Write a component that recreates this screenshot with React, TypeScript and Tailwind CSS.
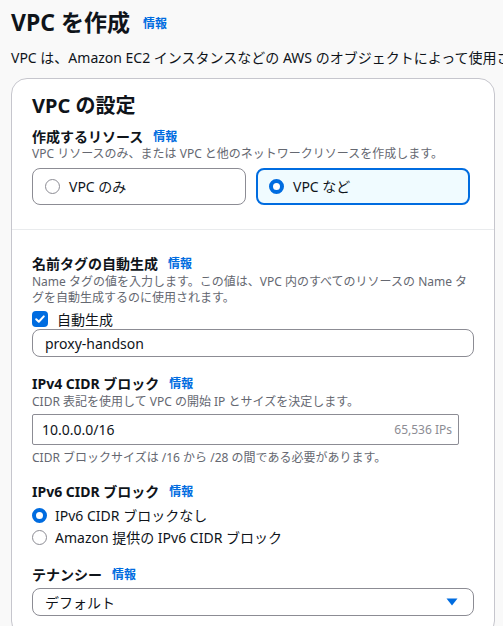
import { useState } from 'react'

const font = { fontFamily: '"Noto Sans", "Noto Sans CJK JP", sans-serif' }

function Info() {
  return <span className="ml-[10px] text-[12px] font-bold text-[#006ce0]">情報</span>
}

function Label({ children }: { children: React.ReactNode }) {
  return (
    <div className="flex items-center text-[14px] font-bold leading-[18px] text-[#0f141a]">
      {children}
      <Info />
    </div>
  )
}

function Desc({ children, className = '' }: { children: React.ReactNode; className?: string }) {
  return <p className={`text-[12px] leading-[16px] text-[#656871] ${className}`}>{children}</p>
}

function Radio({ checked }: { checked: boolean }) {
  return checked ? (
    <span className="h-[15px] w-[15px] shrink-0 rounded-full border-[4px] border-[#006ce0] bg-white" />
  ) : (
    <span className="h-[15px] w-[15px] shrink-0 rounded-full border border-[#8c8c94] bg-white" />
  )
}

export default function App() {
  const [resource, setResource] = useState<'vpc' | 'more'>('more')
  const [ipv6, setIpv6] = useState(0)

  return (
    <div style={font} className="h-[626px] w-[503px] overflow-hidden bg-[#f9f9f9] pl-[11px] pt-[4px] text-[#0f141a]">
      {/* ページ見出し */}
      <h1 className="flex items-center whitespace-nowrap text-[23px] font-bold leading-[32px]">
        VPC を作成
        <span className="ml-[13px] mt-[4px] text-[12px] font-bold text-[#006ce0]">情報</span>
      </h1>
      <p className="mt-[8px] whitespace-nowrap text-[14px] leading-[20px]">
        VPC は、Amazon EC2 インスタンスなどの AWS のオブジェクトによって使用されます
      </p>

      <div className="mt-[10px] w-[484px] rounded-[16px] border border-[#c6c6cd] bg-white">
        <div className="px-[20px] pt-[13px] pb-[24px]">
          <h2 className="text-[20px] font-bold leading-[28px]">VPC の設定</h2>
          <div className="mt-[8px]">
            <Label>作成するリソース</Label>
            <Desc>VPC リソースのみ、または VPC と他のネットワークリソースを作成します。</Desc>
          </div>
          <div className="mt-[6px] flex gap-[10px]">
            <button
              onClick={() => setResource('vpc')}
              className={`flex h-[37px] w-[214px] items-center gap-[9px] rounded-[8px] text-[14px] ${
                resource === 'vpc'
                  ? 'border-2 border-[#006ce0] bg-[#f0fbff] pl-[11px]'
                  : 'border border-[#8c8c94] bg-white pl-[12px]'
              }`}
            >
              <Radio checked={resource === 'vpc'} />
              VPC のみ
            </button>
            <button
              onClick={() => setResource('more')}
              className={`flex h-[37px] w-[214px] items-center gap-[9px] rounded-[8px] text-[14px] ${
                resource === 'more'
                  ? 'border-2 border-[#006ce0] bg-[#f0fbff] pl-[11px]'
                  : 'border border-[#8c8c94] bg-white pl-[12px]'
              }`}
            >
              <Radio checked={resource === 'more'} />
              VPC など
            </button>
          </div>
        </div>

        <div className="border-t border-[#e9ebed] px-[20px] pt-[25px]">
          {/* 名前タグ */}
          <Label>名前タグの自動生成</Label>
          <Desc className="mt-px">
            Name タグの値を入力します。この値は、VPC 内のすべてのリソースの Name タグを自動生成するのに使用されます。
          </Desc>
          <div className="mt-[3px] flex h-[20px] items-center gap-[9px] text-[14px]">
            <span className="flex h-[16px] w-[16px] items-center justify-center rounded-[4px] bg-[#006ce0]">
              <svg width="12" height="12" viewBox="0 0 12 12" fill="none">
                <path d="M2.2 6.2 4.8 8.8 9.8 3.4" stroke="white" strokeWidth="2" strokeLinecap="round" strokeLinejoin="round" />
              </svg>
            </span>
            自動生成
          </div>
          <div className="flex h-[28px] w-[442px] items-center rounded-[8px] border border-[#8c8c94] px-[12px] text-[14px]">
            proxy-handson
          </div>

          {/* IPv4 */}
          <div className="mt-[18px]">
            <Label>IPv4 CIDR ブロック</Label>
            <Desc className="mt-px">CIDR 表記を使用して VPC の開始 IP とサイズを決定します。</Desc>
          </div>
          <div className="mt-[4px] flex h-[31px] w-[427px] items-center justify-between rounded-[2px] border border-[#8c8c94] pl-[9px] pr-[6px]">
            <span className="text-[14px]">10.0.0.0/16</span>
            <span className="text-[12px] text-[#8c8c94]">65,536 IPs</span>
          </div>
          <Desc className="mt-[5px]">CIDR ブロックサイズは /16 から /28 の間である必要があります。</Desc>

          {/* IPv6 */}
          <div className="mt-[17px]">
            <Label>IPv6 CIDR ブロック</Label>
          </div>
          <div className="mt-[3px]">
            {['IPv6 CIDR ブロックなし', 'Amazon 提供の IPv6 CIDR ブロック'].map((t, i) => (
              <div
                key={t}
                onClick={() => setIpv6(i)}
                className="flex h-[22px] items-center gap-[8px] text-[14px]"
              >
                <Radio checked={ipv6 === i} />
                {t}
              </div>
            ))}
          </div>

          {/* テナンシー */}
          <div className="mt-[18px]">
            <Label>テナンシー</Label>
          </div>
          <div className="mt-[4px] flex h-[28px] w-[442px] items-center justify-between rounded-[8px] border border-[#8c8c94] pl-[12px] pr-[15px] text-[14px]">
            デフォルト
            <svg width="12" height="8" viewBox="0 0 12 8">
              <path d="M0.5 0.5h11L6 7.5z" fill="#006ce0" />
            </svg>
          </div>
          <div className="h-[20px]" />
        </div>
      </div>
    </div>
  )
}
